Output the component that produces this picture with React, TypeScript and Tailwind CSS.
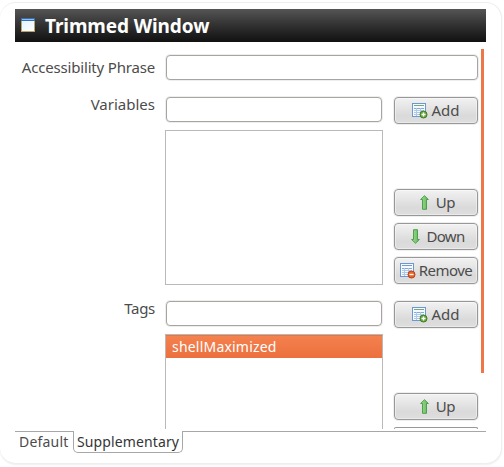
import type { ReactNode } from 'react';

function WindowIcon() {
  return (
    <svg width="14" height="14" viewBox="0 0 14 14" className="-mt-px shrink-0" shapeRendering="crispEdges">
      <defs>
        <linearGradient id="pane" x1="0" y1="0" x2="1" y2="1">
          <stop offset="0" stopColor="#e2f4ff" />
          <stop offset="1" stopColor="#ffffff" />
        </linearGradient>
      </defs>
      <rect width="14" height="14" fill="#b9a368" />
      <rect x="1" y="3" width="12" height="10" fill="url(#pane)" />
      <rect width="14" height="3" fill="#3570b5" />
      <rect x="1" y="1" width="12" height="1" fill="#94bce8" />
    </svg>
  );
}

function TableIcon({ kind }: { kind: 'add' | 'remove' }) {
  const dark = kind === 'add' ? '#3f7c20' : '#b93f10';
  const fill = kind === 'add' ? '#69a93c' : '#e8692c';
  return (
    <svg width="16" height="16" viewBox="0 0 16 16" className="shrink-0">
      <rect x="0.5" y="0.5" width="13" height="13" fill="#f4f9ff" stroke="#6c98d2" />
      <path d="M2 2.5h10" stroke={kind === 'add' ? '#71aa73' : '#7799c3'} />
      <path d="M2 5.5h10" stroke="#86a8d5" />
      <path d="M2 7.5h10M2 9.5h10M2 11.5h9M4.5 5v8M8.5 5v8" stroke="#b0c8e8" />
      <circle cx="11.5" cy="11.5" r="3.5" fill={fill} stroke={dark} />
      <path d={kind === 'add' ? 'M9.5 11.5h4M11.5 9.5v4' : 'M9.5 11.5h4'} stroke="#fff" strokeWidth="1.3" />
    </svg>
  );
}

function ArrowIcon({ down = false }: { down?: boolean }) {
  return (
    <svg width="9" height="15" viewBox="0 0 9 15" className={down ? 'shrink-0 -scale-y-100' : 'shrink-0'}>
      <defs>
        <linearGradient id={down ? 'greenDown' : 'greenUp'} x1="0" y1="0" x2="1" y2="0">
          <stop offset="0" stopColor="#a4dc94" />
          <stop offset="1" stopColor="#5cb856" />
        </linearGradient>
      </defs>
      <path
        d="M4.5 0.7 8.4 4.5H6.5V14.3H2.5V4.5H0.6Z"
        fill={down ? 'url(#greenDown)' : 'url(#greenUp)'}
        stroke="#439843"
        strokeWidth="0.9"
        strokeLinejoin="round"
      />
    </svg>
  );
}

function Button({ children }: { children: ReactNode }) {
  return (
    <button className="flex h-[27px] w-[84px] shrink-0 items-center justify-center rounded-[4px] border border-[#989898] bg-linear-to-b from-[#f2f2f2] via-[#dadada] via-70% to-[#dedede] text-[15px] leading-[20px] text-[#4c4c4c] shadow-[0_0_0_1px_#efefef,inset_0_0_0_1px_#ffffff66]">
      {children}
    </button>
  );
}

function AddButton() {
  return (
    <Button>
      <TableIcon kind="add" />
      <span className="-mt-px ml-[3px]">Add</span>
    </Button>
  );
}

function UpButton() {
  return (
    <Button>
      <span className="flex items-center pl-[3px]">
        <ArrowIcon />
        <span className="-mt-[2px] ml-[7px] tracking-[-0.4px]">Up</span>
      </span>
    </Button>
  );
}

function DownButton() {
  return (
    <Button>
      <span className="flex items-center pl-[3px]">
        <ArrowIcon down />
        <span className="-mt-[2px] ml-[7px] tracking-[-0.7px]">Down</span>
      </span>
    </Button>
  );
}

function RemoveButton() {
  return (
    <Button>
      <TableIcon kind="remove" />
      <span className="-mt-[2px] ml-[3px] tracking-[-0.5px]">Remove</span>
    </Button>
  );
}

function Field({ label, name }: { label: string; name: string }) {
  return (
    <input
      aria-label={label}
      name={name}
      className="block h-[25px] w-full rounded-[4px] border border-[#a7a5a2] bg-white px-1.5 shadow-[0_0_0_1px_#f0eeec] outline-none"
    />
  );
}

function Label({ children }: { children: ReactNode }) {
  return <div className="-mt-px w-[140px] shrink-0 text-right text-[15px] leading-[17px] whitespace-nowrap text-[#4c4c4c]">{children}</div>;
}

export default function App() {
  return (
    <div className="h-[467px] w-[504px] overflow-hidden bg-white pt-[2px] font-['Noto_Sans',sans-serif]">
      <div className="flex h-[462px] w-[502px] flex-col rounded-[16px] border border-l-0 border-[#eeeeee] bg-white px-[15px] pt-[6px] shadow-[0_1px_2px_#eeeeee]">
        <header className="flex h-[33px] w-[471px] shrink-0 items-center bg-linear-to-b from-[#555555] to-[#111111] pl-[6px]">
          <WindowIcon />
          <h1 className="ml-[10px] pt-[2px] text-[19px] leading-none font-bold tracking-[-0.1px] text-white">Trimmed Window</h1>
        </header>

        <main className="flex h-[387px] w-[471px] shrink-0 overflow-hidden pt-[7px]">
          <div className="w-[463px] shrink-0 pt-[6px]">
            <section className="flex gap-[11px]">
              <div className="pt-[5px]"><Label><span className="tracking-[-0.18px]">Accessibility Phrase</span></Label></div>
              <div className="w-[312px]"><Field label="Accessibility Phrase" name="phrase" /></div>
            </section>

            <section className="mt-[17px] flex">
              <Label>Variables</Label>
              <div className="ml-[11px] w-[216px] shrink-0">
                <Field label="Variables" name="variables" />
                <div className="-mx-px mt-[8px] h-[155px] border border-[#bbb9b6]" />
              </div>
              <div className="ml-[12px] flex flex-col gap-[7px]">
                <AddButton />
                <div className="mt-[58px]"><UpButton /></div>
                <DownButton />
                <RemoveButton />
              </div>
            </section>

            <section className="mt-4 flex">
              <Label><span className="tracking-[-0.3px]">Tags</span></Label>
              <div className="ml-[11px] w-[216px] shrink-0">
                <Field label="Tags" name="tags" />
                <div className="-mx-px mt-[8px] h-[155px] border border-[#bbb9b6]">
                  <div className="h-[23px] bg-linear-to-b from-[#f58250] to-[#eb703d] pl-[6px] text-[14px] leading-[23px] tracking-[0.2px] text-white shadow-[inset_0_1px_0_#e67545]">shellMaximized</div>
                </div>
              </div>
              <div className="ml-[12px] flex flex-col gap-[7px]">
                <AddButton />
                <div className="mt-[58px]"><UpButton /></div>
                <div className="h-[2px] w-[84px] rounded-t-[4px] border border-b-0 border-[#989898]" />
              </div>
            </section>
          </div>
          <div className="ml-[3px] h-[324px] w-[3px] bg-[#ef7747]" />
        </main>

        <nav className="mt-[2px] flex h-[22px] w-[471px] shrink-0 text-[14px] leading-[20px] text-[#4c4c4c]">
          <div className="w-[58px] border-t border-[#a7a7a7] pl-[4px] tracking-[0.2px]">Default</div>
          <div className="w-[110px] rounded-b-[5px] border border-t-0 border-[#a7a7a7] pt-px pl-[3px] tracking-[0.12px] text-[#353535]">Supplementary</div>
          <div className="flex-1 border-t border-[#a7a7a7]" />
        </nav>
      </div>
    </div>
  );
}
